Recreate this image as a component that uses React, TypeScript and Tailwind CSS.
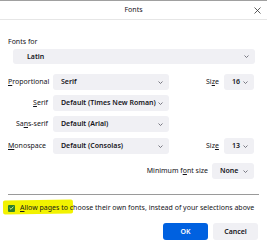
import React from "react";

const Chevron = () => (
  <svg width="5" height="3" viewBox="0 0 5 3" className="shrink-0">
    <path d="M0.5 0.5 L2.5 2.5 L4.5 0.5" fill="none" stroke="#5b5b66" strokeWidth="0.8" />
  </svg>
);

const Select = ({ value, className }: { value: string; className: string }) => (
  <div className={`flex items-center justify-between rounded-[3px] bg-[#f0f0f4] pl-[8px] pr-[6px] font-semibold ${className}`}>
    <span className="whitespace-nowrap">{value}</span>
    <Chevron />
  </div>
);

const Label = ({ pre, key_, post }: { pre: string; key_: string; post: string }) => (
  <span className="whitespace-nowrap">
    {pre}
    <span className="underline underline-offset-[1px]">{key_}</span>
    {post}
  </span>
);

export default function App() {
  return (
    <div
      className="w-[267px] h-[250px] bg-white text-[#15141a] text-[7px] leading-[10px] border-t border-[#a0a0a0] overflow-hidden"
      style={{ fontFamily: '"Noto Sans", "Open Sans", sans-serif' }}
    >
      <div className="h-[19px] flex items-center justify-center relative border-b border-[#e6e6e6]">
        <span className="text-[7px]">Fonts</span>
        <svg className="absolute right-[6px] top-[6px]" width="7" height="7" viewBox="0 0 7 7">
          <path d="M0.5 0.5 L6.5 6.5 M6.5 0.5 L0.5 6.5" stroke="#333" strokeWidth="0.8" />
        </svg>
      </div>

      <div className="pl-[8px] pt-[17px]">
        <div className="h-[10px] flex items-center">Fonts for</div>
        <Select value="Latin" className="ml-[5px] mt-[2px] w-[242px] h-[15px] pl-[14px]" />

        <div className="mt-[10px] flex flex-col gap-[5px]">
          <div className="flex items-center h-[16px]">
            <div className="w-[40px] text-right"><Label pre="" key_="P" post="roportional" /></div>
            <Select value="Serif" className="ml-[5px] w-[116px] h-[16px]" />
            <div className="ml-[37px] w-[13px]"><Label pre="Si" key_="z" post="e" /></div>
            <Select value="16" className="ml-[5px] w-[30px] h-[16px]" />
          </div>
          <div className="flex items-center h-[16px]">
            <div className="w-[40px] text-right"><Label pre="" key_="S" post="erif" /></div>
            <Select value="Default (Times New Roman)" className="ml-[5px] w-[116px] h-[16px]" />
          </div>
          <div className="flex items-center h-[16px]">
            <div className="w-[40px] text-right"><Label pre="Sa" key_="n" post="s-serif" /></div>
            <Select value="Default (Arial)" className="ml-[5px] w-[116px] h-[16px]" />
          </div>
          <div className="flex items-center h-[16px] mt-[1px]">
            <div className="w-[40px]"><Label pre="" key_="M" post="onospace" /></div>
            <Select value="Default (Consolas)" className="ml-[5px] w-[116px] h-[16px]" />
            <div className="ml-[37px] w-[13px]"><Label pre="Siz" key_="e" post="" /></div>
            <Select value="13" className="ml-[5px] w-[30px] h-[16px]" />
          </div>
          <div className="flex items-center justify-end h-[16px] mt-[4px] pr-[13px]">
            <Label pre="Minimum f" key_="o" post="nt size" />
            <Select value="None" className="ml-[4px] w-[42px] h-[16px]" />
          </div>
        </div>

        <div className="mt-[15px] mr-[8px] border-t border-[#9a9a9a]" />

        <div className="mt-[8px] flex items-center h-[10px] relative">
          <div className="absolute left-[-5px] top-[-3px] w-[70px] h-[14px] bg-[#f2f200] rounded-[2px] -rotate-[1deg]" />
          <div className="relative w-[7px] h-[7px] rounded-[1px] bg-[#2f7f2c] flex items-center justify-center">
            <svg width="5" height="4" viewBox="0 0 5 4">
              <path d="M0.6 2 L2 3.3 L4.4 0.6" fill="none" stroke="#e8f0a0" strokeWidth="0.9" />
            </svg>
          </div>
          <span className="relative ml-[5px] whitespace-nowrap">
            <span className="underline underline-offset-[1px]">A</span>llow pages to choose their own fonts, instead of your selections above
          </span>
        </div>

        <div className="mt-[10px] mr-[9px] flex justify-end gap-[5px]">
          <div className="w-[45px] h-[17px] rounded-[3px] bg-[#0061e0] text-white font-semibold flex items-center justify-center">OK</div>
          <div className="w-[45px] h-[17px] rounded-[3px] bg-[#f0f0f4] font-semibold flex items-center justify-center">Cancel</div>
        </div>
      </div>
    </div>
  );
}
